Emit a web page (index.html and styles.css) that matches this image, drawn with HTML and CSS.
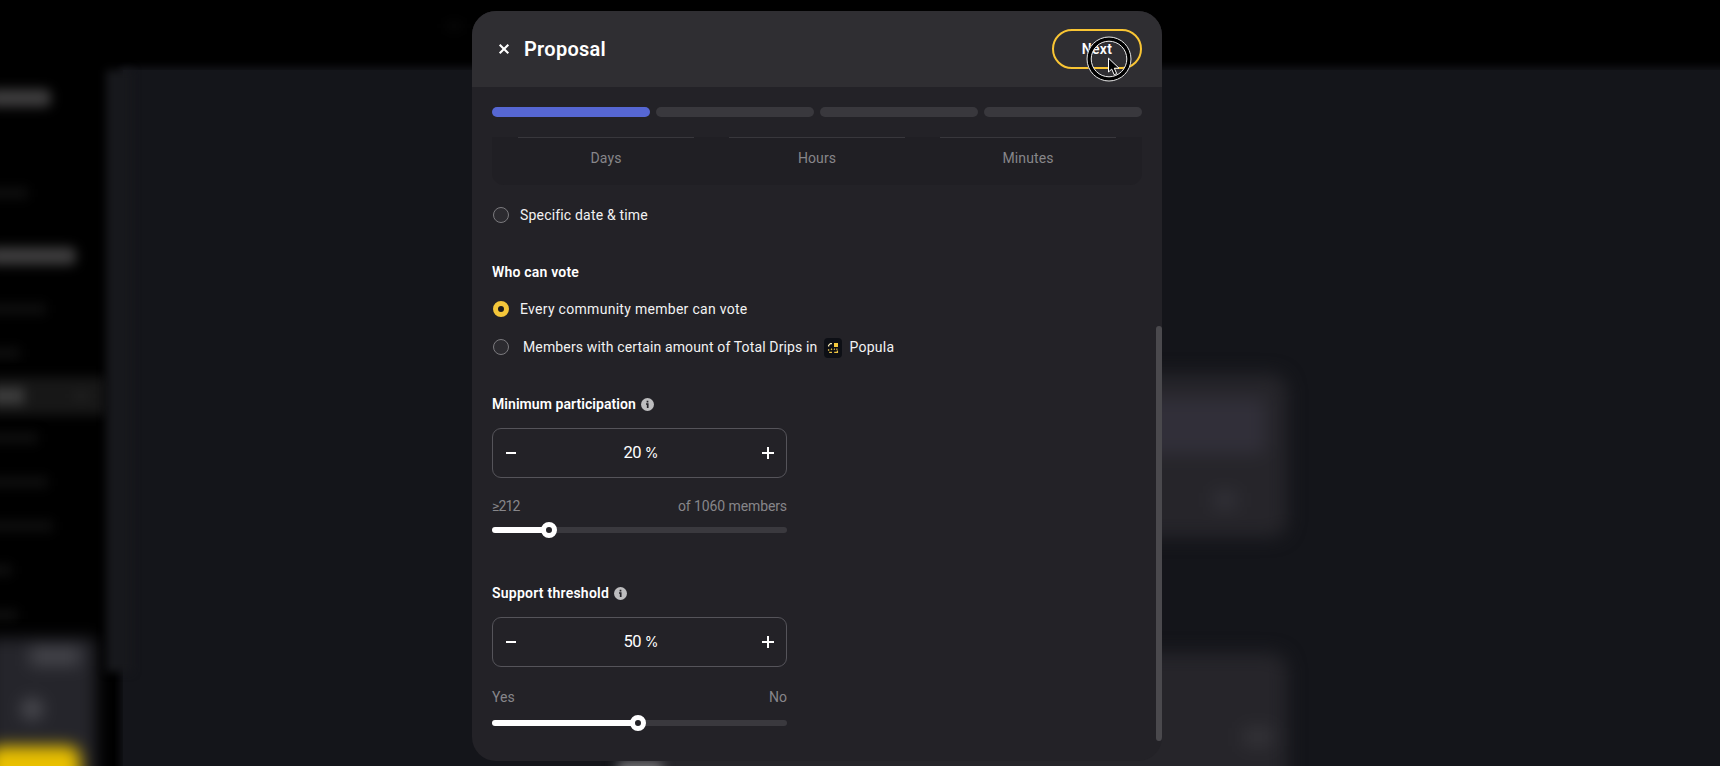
FILE: index.html
```html
<!DOCTYPE html>
<html lang="en">
<head>
<meta charset="utf-8">
<title>Proposal</title>
<link rel="stylesheet" href="styles.css">
</head>
<body>
<div class="backdrop">
  <div class="topbar"><span></span></div>
  <div class="page">
    <div class="side">
      <div class="menu">
        <i class="bar bright b1"></i>
        <i class="bar b2"></i>
        <i class="bar bright b3"></i>
        <i class="bar b4"></i>
        <i class="bar b5"></i>
        <div class="active"><i></i><b></b></div>
        <i class="bar b6"></i>
        <i class="bar b7"></i>
        <i class="bar b8"></i>
        <i class="bar b9"></i>
        <i class="bar b10"></i>
      </div>
      <div class="promo"><i class="p1"></i><i class="p2"></i><i class="p3"></i></div>
    </div>
    <div class="edge"></div>
    <div class="cards">
      <div class="card first"><div class="strip"></div><i></i></div>
      <div class="card second"><i></i></div>
      <div class="glow"></div>
    </div>
  </div>
</div>

<main class="modal">
  <header class="head">
    <svg class="close" width="12" height="12" viewBox="0 0 12 12"><path d="M1.7 1.7 10.3 10.3M10.3 1.7 1.7 10.3"/></svg>
    <h1>Proposal</h1>
    <button class="next">Next
      <svg class="pointer" width="46" height="46" viewBox="0 0 46 46">
        <circle cx="23" cy="23" r="20" fill="none" stroke="#000" stroke-width="4.6"/>
        <circle cx="23" cy="23" r="22" fill="none" stroke="#eee" stroke-width="1"/>
        <circle cx="23" cy="23" r="17.8" fill="none" stroke="#eee" stroke-width="1"/>
        <path d="M22.5 22.2V36l3.2-2.9 2.5 5.6 2.5-1.1-2.4-5.4h4.7z" fill="#000" stroke="#fff" stroke-width="1"/>
      </svg>
    </button>
  </header>
  <div class="body">
    <div class="steps"><i class="on"></i><i></i><i></i><i></i></div>
    <section class="units"><span>Days</span><span>Hours</span><span>Minutes</span></section>
    <label class="row specific"><i class="radio"></i><span>Specific date &amp; time</span></label>

    <h2 class="who">Who can vote</h2>
    <label class="row every"><i class="radio on"></i><span>Every community member can vote</span></label>
    <label class="row members"><i class="radio"></i><span>Members with certain amount of Total Drips in</span>
      <svg class="logo" width="18" height="20" viewBox="0 0 18 20">
        <rect width="18" height="20" rx="4" fill="#0d0f15"/>
        <path d="M10 5h4v4h-4z" fill="#f7cb3c"/>
        <path d="M4.6 8.6V7.4L6.4 5.6H8" fill="none" stroke="#f3e6b4" stroke-width="1.3"/>
        <path d="M4.6 11.2v1.6M5.2 14.4H8M10.2 14.4h3.2V12.6M13.4 11.6l-1-.8M7 11.8l1-1M10 10.8l.8.8" fill="none" stroke="#edc443" stroke-width="1.3"/>
      </svg><span class="popula">Popula</span></label>

    <h2 class="minimum">Minimum participation <svg class="info" width="13" height="13" viewBox="0 0 13 13"><circle cx="6.5" cy="6.5" r="6.5" fill="#bdbdbf"/><path d="M5 6h1.7v3.9M6.5 2.7v1.7" stroke="#232227" stroke-width="1.7" fill="none"/></svg></h2>
    <div class="stepper"><svg width="10" height="18" viewBox="0 0 10 18"><path d="M0 9h10"/></svg><span class="value">20 <small>%</small></span><svg width="12" height="18" viewBox="0 0 12 18"><path d="M0 9h12M6 3v12"/></svg></div>
    <div class="ends one"><span class="count">≥212</span><span class="of">of 1060 members</span></div>
    <div class="slider"><i class="fill" style="width:57px"></i><i class="knob"></i><i class="rest"></i></div>

    <h2 class="support">Support threshold <svg class="info" width="13" height="13" viewBox="0 0 13 13"><circle cx="6.5" cy="6.5" r="6.5" fill="#bdbdbf"/><path d="M5 6h1.7v3.9M6.5 2.7v1.7" stroke="#232227" stroke-width="1.7" fill="none"/></svg></h2>
    <div class="stepper"><svg width="10" height="18" viewBox="0 0 10 18"><path d="M0 9h10"/></svg><span class="value">50 <small>%</small></span><svg width="12" height="18" viewBox="0 0 12 18"><path d="M0 9h12M6 3v12"/></svg></div>
    <div class="ends two"><span>Yes</span><span>No</span></div>
    <div class="slider last"><i class="fill" style="width:146px"></i><i class="knob"></i><i class="rest"></i></div>
  </div>
  <div class="thumb"></div>
</main>
</body>
</html>
```
FILE: styles.css
```css
* { box-sizing: border-box; }
html, body { height: 766px; margin: 0; overflow: hidden; background: #000; }
body { position: relative; padding: 11px 0 0 472px; font: 14px/20px Roboto, "Liberation Sans", sans-serif; color: #f2f2f3; }

/* Blurred page behind the dialog */
.backdrop { position: absolute; inset: 0; overflow: hidden; background: #000; }
.topbar { height: 70px; padding: 22px 0 0 446px; filter: blur(6px); }
.topbar span { display: block; width: 16px; height: 8px; background: #080808; }
.page { display: flex; width: 1760px; height: 736px; }
.side { display: flex; flex-direction: column; width: 106px; height: 696px; }
.menu { display: flex; flex: none; flex-direction: column; align-items: flex-start; height: 568px; }
.bar { flex: none; width: 40px; height: 10px; margin-left: -12px; background: #101010; filter: blur(6px); }
.bright { height: 18px; border-radius: 6px; background: #3d3c3d; }
.b1 { width: 63px; margin-top: 19px; }
.b2 { margin-top: 81px; }
.b3 { width: 88px; margin-top: 49px; }
.b4 { width: 58px; margin-top: 39px; }
.b5 { width: 32px; margin-top: 34px; }
.b6 { width: 50px; margin-top: 17px; }
.b7 { width: 60px; margin-top: 34px; }
.b8 { width: 65px; margin-top: 34px; }
.b9 { width: 24px; margin-top: 34px; }
.b10 { width: 30px; margin-top: 35px; }
.active { display: flex; flex: none; align-items: center; justify-content: space-between; width: 116px; height: 38px; margin: 19px 0 1px -10px; padding-right: 18px; background: #171717; filter: blur(6px); }
.active i { width: 34px; height: 16px; background: #3d3d3d; }
.active b { width: 14px; height: 8px; background: #202020; }
.promo { flex: none; display: flex; flex-direction: column; align-items: flex-start; width: 108px; height: 160px; margin-left: -12px; padding-top: 8px; background: #25252b; filter: blur(8px); }
.p1 { flex: none; width: 50px; height: 20px; margin-left: 42px; background: #434349; }
.p2 { flex: none; width: 22px; height: 22px; margin: 32px 0 0 33px; border-radius: 50%; background: #4a4a50; }
.p3 { width: 92px; height: 80px; margin-top: 26px; border-radius: 12px; background: #e9c000; flex: none; }
.edge { flex: none; width: 26px; height: 602px; background: #17181c; filter: blur(4px); }
.cards { flex: 1; height: 736px; padding: 304px 0 0 500px; margin-left: -9px; background: #14151a; box-shadow: 0 0 8px 3px #14151a; }
.card { width: 664px; filter: blur(9px); background: #26252a; border-radius: 16px; }
.first { height: 163px; padding: 24px 22px; }
.strip { height: 56px; border-radius: 8px; background: #312f39; }
.first i { display: block; width: 22px; height: 16px; margin: 38px 0 0 569px; background: #34333a; }
.second { height: 160px; margin-top: 116px; padding-top: 75px; }
.second i { display: block; width: 30px; height: 18px; margin-left: 620px; background: #343338; }
.glow { width: 44px; height: 16px; margin: -51px 0 0 -5px; background: #77777a; filter: blur(6px); }

/* Dialog */
.modal { position: relative; width: 690px; height: 750px; border-radius: 24px; overflow: hidden; background: #232227; }
.head { display: flex; align-items: center; height: 76px; padding: 0 20px 0 26px; background: #2f2e32; }
.close { fill: none; stroke: #fff; stroke-width: 2.1; }
h1 { margin: 0 auto 0 14px; font-size: 20px; font-weight: 600; line-height: 28px; letter-spacing: .27px; color: #fff; }
.next { position: relative; width: 90px; height: 40px; padding: 0; border: 2px solid #f9c534; border-radius: 20px; background: transparent; color: #fff; font: 600 14px/20px Roboto, sans-serif; letter-spacing: .3px; }
.pointer { position: absolute; left: 32px; top: 5px; }
.body { display: flex; flex-direction: column; padding: 20px 20px 0; }
.steps { display: grid; grid-template-columns: repeat(4, 1fr); gap: 6px; height: 10px; }
.steps i { border-radius: 5px; background: #39383d; }
.steps .on { background: #5667d3; }
.units { display: grid; grid-template-columns: 176px 176px 176px; gap: 35px; height: 48px; margin-top: 20px; padding-left: 26px; border-radius: 0 0 12px 12px; background: #201f24; color: #87868a; text-align: center; }
.units span { padding-top: 10px; border-top: 1px solid #38373c; letter-spacing: .1px; }
.row { display: flex; align-items: center; height: 20px; letter-spacing: .29px; }
.radio { width: 16px; height: 16px; margin: 0 11px 0 1px; border: 1px solid #7b7a7e; border-radius: 50%; background: #2c2b30; }
.radio.on { border: 5px solid #f4c63a; background: #1c1a1d; }
.specific { margin-top: 20px; letter-spacing: .18px; }
h2 { display: flex; align-items: center; height: 20px; margin: 0; font-size: 14px; font-weight: 600; color: #fff; }
.info { margin-left: 5px; }
.who { margin-top: 37px; letter-spacing: .2px; }
.every { margin-top: 17px; }
.members { margin-top: 18px; letter-spacing: .14px; }
.members .radio { margin-right: 14px; }
.logo { margin: 2px 7px 0; }
.popula { letter-spacing: .25px; }
.minimum { margin-top: 37px; letter-spacing: .07px; }
.support { margin-top: 45px; letter-spacing: .24px; }
.stepper { display: flex; align-items: center; justify-content: space-between; width: 295px; height: 50px; margin-top: 14px; padding: 0 12px 0 13px; border: 1px solid #55545a; border-radius: 9px; }
.stepper svg { stroke: #fff; stroke-width: 2; }
.value { margin: -1px 0 0 4px; font-size: 16.5px; letter-spacing: -.5px; color: #fff; }
.value small { font: 14px Inter, sans-serif; letter-spacing: 0; }
.ends { display: flex; justify-content: space-between; width: 295px; height: 20px; color: #87868a; }
.one { margin-top: 18px; }
.two { margin-top: 20px; }
.count { letter-spacing: -.85px; }
.of { letter-spacing: -.1px; }
.slider { display: flex; align-items: center; width: 295px; height: 16px; margin-top: 6px; }
.fill { flex: none; height: 6px; margin-right: -8px; border-radius: 3px; background: #fff; }
.knob { flex: none; z-index: 1; width: 16px; height: 16px; border: 5px solid #fff; border-radius: 50%; background: #232227; }
.rest { flex: 1; height: 6px; margin-left: -3px; border-radius: 0 3px 3px 0; background: #3a393e; }
.last { margin-top: 8px; }
.thumb { position: absolute; right: 0; top: 315px; width: 6px; height: 415px; border-radius: 3px; background: #4a494d; }
```
